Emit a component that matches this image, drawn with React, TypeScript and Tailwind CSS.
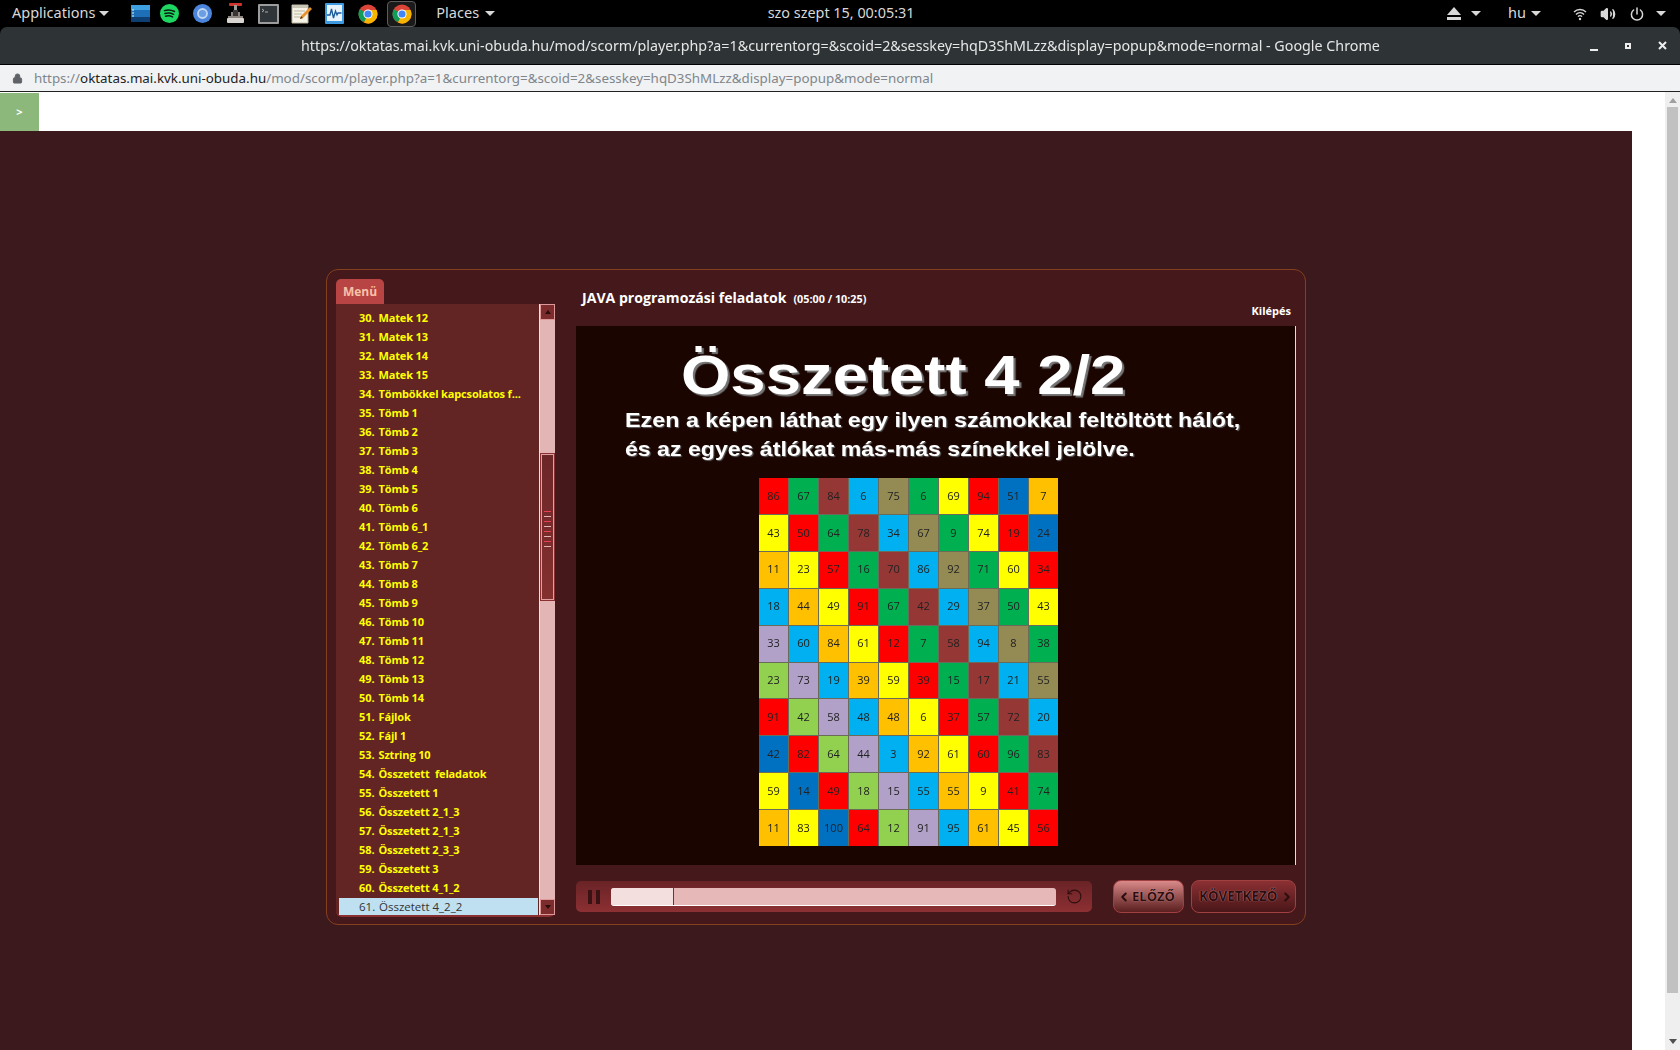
import { ChevronLeft, ChevronRight, RotateCcw, Lock, Volume2 } from 'lucide-react';

const menuItems = [
  ['30.', 'Matek 12'], ['31.', 'Matek 13'], ['32.', 'Matek 14'], ['33.', 'Matek 15'],
  ['34.', 'Tömbökkel kapcsolatos f...'], ['35.', 'Tömb 1'], ['36.', 'Tömb 2'], ['37.', 'Tömb 3'],
  ['38.', 'Tömb 4'], ['39.', 'Tömb 5'], ['40.', 'Tömb 6'], ['41.', 'Tömb 6_1'], ['42.', 'Tömb 6_2'],
  ['43.', 'Tömb 7'], ['44.', 'Tömb 8'], ['45.', 'Tömb 9'], ['46.', 'Tömb 10'], ['47.', 'Tömb 11'],
  ['48.', 'Tömb 12'], ['49.', 'Tömb 13'], ['50.', 'Tömb 14'], ['51.', 'Fájlok'], ['52.', 'Fájl 1'],
  ['53.', 'Sztring 10'], ['54.', 'Összetett  feladatok'], ['55.', 'Összetett 1'], ['56.', 'Összetett 2_1_3'],
  ['57.', 'Összetett 2_1_3'], ['58.', 'Összetett 2_3_3'], ['59.', 'Összetett 3'], ['60.', 'Összetett 4_1_2'],
];

const cellColors: Record<string, string> = {
  R: 'bg-[#ff0000]', G: 'bg-[#00b050]', B: 'bg-[#953735]', C: 'bg-[#00b0f0]', O: 'bg-[#948a54]',
  Y: 'bg-[#ffff00]', A: 'bg-[#ffc000]', D: 'bg-[#0070c0]', P: 'bg-[#b1a0c7]', L: 'bg-[#92d050]',
};

const grid: [number, string][][] = [
  [[86, 'R'], [67, 'G'], [84, 'B'], [6, 'C'], [75, 'O'], [6, 'G'], [69, 'Y'], [94, 'R'], [51, 'D'], [7, 'A']],
  [[43, 'Y'], [50, 'R'], [64, 'G'], [78, 'B'], [34, 'C'], [67, 'O'], [9, 'G'], [74, 'Y'], [19, 'R'], [24, 'D']],
  [[11, 'A'], [23, 'Y'], [57, 'R'], [16, 'G'], [70, 'B'], [86, 'C'], [92, 'O'], [71, 'G'], [60, 'Y'], [34, 'R']],
  [[18, 'C'], [44, 'A'], [49, 'Y'], [91, 'R'], [67, 'G'], [42, 'B'], [29, 'C'], [37, 'O'], [50, 'G'], [43, 'Y']],
  [[33, 'P'], [60, 'C'], [84, 'A'], [61, 'Y'], [12, 'R'], [7, 'G'], [58, 'B'], [94, 'C'], [8, 'O'], [38, 'G']],
  [[23, 'L'], [73, 'P'], [19, 'C'], [39, 'A'], [59, 'Y'], [39, 'R'], [15, 'G'], [17, 'B'], [21, 'C'], [55, 'O']],
  [[91, 'R'], [42, 'L'], [58, 'P'], [48, 'C'], [48, 'A'], [6, 'Y'], [37, 'R'], [57, 'G'], [72, 'B'], [20, 'C']],
  [[42, 'D'], [82, 'R'], [64, 'L'], [44, 'P'], [3, 'C'], [92, 'A'], [61, 'Y'], [60, 'R'], [96, 'G'], [83, 'B']],
  [[59, 'Y'], [14, 'D'], [49, 'R'], [18, 'L'], [15, 'P'], [55, 'C'], [55, 'A'], [9, 'Y'], [41, 'R'], [74, 'G']],
  [[11, 'A'], [83, 'Y'], [100, 'D'], [64, 'R'], [12, 'L'], [91, 'P'], [95, 'C'], [61, 'A'], [45, 'Y'], [56, 'R']],
];

function Caret() {
  return <span className="w-0 h-0 border-x-[5px] border-x-transparent border-t-[5px] border-t-[#d8d8d8]" />;
}

function ChromeIcon() {
  return (
    <svg width="20" height="20" viewBox="0 0 20 20">
      <circle cx="10" cy="10" r="9.5" fill="#db4437" />
      <path d="M10 10 1.8 5.2A9.5 9.5 0 0 0 6 18.6Z" fill="#0f9d58" />
      <path d="M10 10 6 18.6A9.5 9.5 0 0 0 18.6 6H10Z" fill="#f4b400" />
      <circle cx="10" cy="10" r="4.6" fill="#fff" />
      <circle cx="10" cy="10" r="3.6" fill="#4285f4" />
    </svg>
  );
}

function DockIcons() {
  return (
    <>
      <svg className="ml-[22px]" width="19" height="17" viewBox="0 0 19 17">
        <rect width="19" height="17" rx="1" fill="#1d6fb8" />
        <rect x="0" y="0" width="19" height="5" fill="#3ea0e0" />
        <rect x="0" y="12" width="19" height="5" fill="#0d3f73" />
        <path d="M1 5h2M1 8h2M1 11h2" stroke="#dff" strokeWidth="1" />
      </svg>
      <svg className="ml-[10px]" width="19" height="19" viewBox="0 0 19 19">
        <circle cx="9.5" cy="9.5" r="9.5" fill="#1ed760" />
        <path d="M4.5 6.6c3.4-1 7-.7 10 .9M5 9.5c2.8-.8 6-.6 8.6.8M5.6 12.2c2.3-.6 4.9-.4 7 .7" fill="none" stroke="#0b1f10" strokeWidth="1.5" strokeLinecap="round" />
      </svg>
      <svg className="ml-[14px]" width="19" height="19" viewBox="0 0 19 19">
        <circle cx="9.5" cy="9.5" r="9.5" fill="#4c86dc" />
        <circle cx="9.5" cy="9.5" r="5.4" fill="#c3d6f2" />
        <circle cx="9.5" cy="9.5" r="3.6" fill="#6a9fe6" />
      </svg>
      <svg className="ml-[14px]" width="19" height="21" viewBox="0 0 19 21">
        <rect x="3" y="0" width="13" height="3" rx="1" fill="#d0342c" />
        <rect x="8" y="2" width="3" height="10" fill="#9a9a9a" />
        <path d="M5 9h9v4h3v6H2v-6h3Z" fill="#8d8580" />
        <rect x="1" y="15" width="17" height="5" rx="1" fill="#d8d4cf" />
        <rect x="7" y="7" width="5" height="6" fill="#3a3532" />
      </svg>
      <svg className="ml-[13px]" width="21" height="20" viewBox="0 0 21 20">
        <rect width="21" height="20" rx="1" fill="#9c9c9c" />
        <rect x="2" y="2" width="17" height="16" fill="#2f3538" />
        <path d="M4 5l2 1.5L4 8" fill="none" stroke="#ccc" strokeWidth="0.8" />
        <path d="M7 8h3" stroke="#ccc" strokeWidth="0.8" />
      </svg>
      <svg className="ml-[12px]" width="21" height="21" viewBox="0 0 21 21">
        <path d="M1 2h16v18H1Z" fill="#f6f3e6" stroke="#b9b5a3" />
        <path d="M1 2h16v3H1Z" fill="#c9c5b4" />
        <path d="M3 8h11M3 11h8M3 14h6" stroke="#b9b5a3" strokeWidth="1" />
        <path d="M9 16l1-3 9-9 2 2-9 9Z" fill="#e8912d" />
        <path d="M9 16l1-3 2 2Z" fill="#5b3b1c" />
      </svg>
      <svg className="ml-[13px]" width="19" height="21" viewBox="0 0 19 21">
        <rect width="19" height="21" rx="1" fill="#3d9ae0" />
        <rect x="2" y="2" width="15" height="16" fill="#e9f3fb" />
        <path d="M2 12h3l1.5-6 2 9 2-7 1.5 4 1-2h3.5" fill="none" stroke="#185a9c" strokeWidth="1.3" />
      </svg>
      <span className="ml-[14px]"><ChromeIcon /></span>
      <span className="ml-[9px] w-[29px] h-[26px] flex items-center justify-center rounded-[4px] border border-[#5c5c5c] bg-[#1a1a1a]">
        <ChromeIcon />
      </span>
    </>
  );
}

function TopBar() {
  return (
    <div className="h-[27px] bg-black flex items-center text-[#d8d8d8] text-[14.5px]">
      <span className="ml-[12px] mb-[2px]">Applications</span>
      <span className="ml-[4px] flex"><Caret /></span>
      <DockIcons />
      <span className="ml-[20px] mb-[2px]">Places</span>
      <span className="ml-[6px] flex"><Caret /></span>
      <span className="ml-[256px] w-[180px] mb-[2px] text-center text-[14.4px] whitespace-nowrap">szo szept 15, 00:05:31</span>
      <svg className="ml-[516px]" width="14" height="13" viewBox="0 0 14 13" fill="#d8d8d8">
        <path d="M7 0l7 8H0Z" />
        <rect y="10" width="14" height="3" />
      </svg>
      <span className="ml-[10px] flex"><Caret /></span>
      <span className="ml-[27px] mb-[2px]">hu</span>
      <span className="ml-[5px] flex"><Caret /></span>
      <svg className="ml-[32px]" width="14" height="14" viewBox="0 0 14 14" fill="none" stroke="#d8d8d8" strokeWidth="1.4">
        <path d="M1 5a8.5 8.5 0 0 1 12 0M3 7.4a5.5 5.5 0 0 1 8 0M5 9.6a2.6 2.6 0 0 1 4 0" />
        <circle cx="7" cy="12" r="1.2" fill="#d8d8d8" stroke="none" />
      </svg>
      <Volume2 className="ml-[13px]" size={16} color="#d8d8d8" fill="#d8d8d8" />
      <svg className="ml-[14px]" width="14" height="14" viewBox="0 0 14 14" fill="none" stroke="#d8d8d8" strokeWidth="1.5" strokeLinecap="round">
        <path d="M7 1v6M3.6 3a5.6 5.6 0 1 0 6.8 0" />
      </svg>
      <span className="ml-[12px] flex"><Caret /></span>
    </div>
  );
}

function TitleBar() {
  return (
    <div className="h-[38px] bg-[#2e3436] rounded-t-[7px] flex items-center text-[#e6e6e6] text-[14.5px] font-['Noto_Sans',sans-serif] border-b border-black">
      <span className="ml-[301px] w-[1078px] whitespace-nowrap origin-left scale-x-[0.985]">https://oktatas.mai.kvk.uni-obuda.hu/mod/scorm/player.php?a=1&amp;currentorg=&amp;scoid=2&amp;sesskey=hqD3ShMLzz&amp;display=popup&amp;mode=normal - Google Chrome</span>
      <span className="ml-[211px] w-[8px] h-[2px] mt-[8px] bg-[#eee]" />
      <span className="ml-[27px] w-[6px] h-[6px] border-2 border-[#eee]" />
      <svg className="ml-[27px]" width="9" height="9" viewBox="0 0 9 9" stroke="#eee" strokeWidth="2">
        <path d="M1 1l7 7M8 1L1 8" />
      </svg>
    </div>
  );
}

function AddressBar() {
  return (
    <div className="h-[27px] bg-[#f1f2f4] border-b border-[#222] flex items-center text-[13.37px] font-['Noto_Sans',sans-serif] text-[#80868b]">
      <Lock className="ml-[12px]" size={11} color="#5f6368" fill="#5f6368" />
      <span className="ml-[11px] whitespace-nowrap">
        https://<span className="text-[#222]">oktatas.mai.kvk.uni-obuda.hu</span>/mod/scorm/player.php?a=1&amp;currentorg=&amp;scoid=2&amp;sesskey=hqD3ShMLzz&amp;display=popup&amp;mode=normal
      </span>
    </div>
  );
}

function ScrollGrip() {
  return (
    <div className="flex flex-col gap-[4px] items-center mt-[56px]">
      {[0, 1, 2, 3, 4, 5, 6, 7].map(i => (
        <span key={i} className={`w-[7px] h-px ${i % 2 === 0 ? 'bg-[#e8404f]' : 'bg-[#e6b3b3]'}`} />
      ))}
    </div>
  );
}

function SidebarMenu() {
  return (
    <div className="w-[219px] flex flex-col ml-[9px] mt-[9px]">
      <div className="w-[48px] h-[25px] rounded-t-[5px] bg-[#b84444] flex items-center justify-center text-[12px] font-bold text-[#f7c2a8] font-['Open_Sans',sans-serif]">
        Menü
      </div>
      <div className="h-[613px] bg-[#632424] rounded-b-[6px] border-b-2 border-[#8a3030] flex">
        <div className="w-[203px] pt-[5px] font-['Open_Sans',sans-serif] text-[11px] font-bold text-[#ffff00]">
          {menuItems.map(([n, name]) => (
            <div key={n} className="h-[19px] flex items-center pl-[23px] whitespace-pre">
              <span className="w-[19.5px]">{n}</span>
              <span className="tracking-[-0.15px]">{name}</span>
            </div>
          ))}
          <div className="h-[17px] ml-[3px] w-[199px] bg-[#bfe0f0] flex items-center pl-[20px] text-[#333] text-[11.5px] font-normal whitespace-pre">
            <span className="w-[20px]">61.</span>
            <span>Összetett 4_2_2</span>
          </div>
        </div>
        <div className="w-[16px] border-l border-[#f3e3e3] flex flex-col bg-[#e4b5b5]">
          <div className="h-[16px] bg-[#7d2c2e] border border-[#d99] flex items-center justify-center">
            <span className="w-0 h-0 border-x-[3px] border-x-transparent border-b-[4px] border-b-[#2a0c0c]" />
          </div>
          <div className="h-[133px]" />
          <div className="h-[148px] bg-[#6c2628] border border-[#8a3033]">
            <div className="h-[146px] border border-[#e0a0a0] bg-gradient-to-b from-[#6c2628] to-[#84302f]">
              <ScrollGrip />
            </div>
          </div>
          <div className="flex-1" />
          <div className="h-[16px] bg-[#7d2c2e] border border-[#d99] flex items-center justify-center">
            <span className="w-0 h-0 border-x-[3px] border-x-transparent border-t-[4px] border-t-[#2a0c0c]" />
          </div>
        </div>
      </div>
    </div>
  );
}

function Slide() {
  return (
    <div className="h-[539px] bg-[#1a0500] border-r border-[#ddd] flex flex-col font-['Liberation_Sans',sans-serif] font-bold text-white">
      <div className="pl-[105px] pt-[16px] text-[56px] leading-[66px] [text-shadow:2px_2px_1px_#777] whitespace-nowrap">
        <div className="origin-left scale-x-[1.133]">Összetett 4 2/2</div>
      </div>
      <div className="pl-[49px] -mt-[3px] text-[21px] leading-[29px] [text-shadow:1px_1px_1px_#666] whitespace-nowrap">
        <div className="origin-left scale-x-[1.11]">Ezen a képen láthat egy ilyen számokkal feltöltött hálót,</div>
        <div className="origin-left scale-x-[1.1]">és az egyes átlókat más-más színekkel jelölve.</div>
      </div>
      <div className="ml-[183px] mt-[15px] w-[299px] h-[368px] grid grid-cols-10 grid-rows-10 gap-px bg-[#6b6b5a] blur-[0.4px]">
        {grid.flat().map(([n, c], i) => (
          <div key={i} className={`${cellColors[c]} flex items-center justify-center text-[11px] font-normal font-['Open_Sans',sans-serif] text-[#222]`}>
            {n}
          </div>
        ))}
      </div>
    </div>
  );
}

function Controls() {
  return (
    <div className="mt-[15px] flex items-center">
      <div className="w-[516px] h-[31px] rounded-[5px] bg-gradient-to-b from-[#6a2326] to-[#8c3033] flex items-center">
        <div className="ml-[12px] flex gap-[4px]">
          <span className="w-[4px] h-[14px] bg-[#3a1214]" />
          <span className="w-[4px] h-[14px] bg-[#3a1214]" />
        </div>
        <div className="ml-[11px] w-[445px] h-[18px] rounded-[3px] bg-[#e6b8b8] border-b border-white flex overflow-hidden">
          <div className="w-[63px] bg-[#f4dfdf] border-r border-[#7a3030]" />
        </div>
        <RotateCcw className="ml-[10px]" size={17} color="#2d0d0e" strokeWidth={1.5} />
      </div>
      <button className="ml-[21px] w-[71px] h-[33px] pl-[3px] rounded-[8px] border border-[#a04040] bg-gradient-to-b from-[#d98a8a] to-[#5c1f20] flex items-center text-[13px] font-bold text-[#2d0d0e] font-['Open_Sans',sans-serif] [text-shadow:0_0_1px_#e8b0b0]">
        <ChevronLeft size={14} strokeWidth={3.5} />
        <span className="ml-[1px]">ELŐZŐ</span>
      </button>
      <button className="ml-[7px] w-[105px] h-[33px] pl-[7px] pr-px rounded-[8px] border border-[#a04040] bg-gradient-to-b from-[#8c3033] to-[#4a1719] flex items-center justify-between text-[13.4px] font-bold text-[#2d0d0e] font-['Open_Sans',sans-serif] [text-shadow:0_0_1px_#e8b0b0]">
        <span>KÖVETKEZŐ</span>
        <ChevronRight size={14} strokeWidth={3.5} />
      </button>
    </div>
  );
}

function Player() {
  return (
    <div className="ml-[326px] mt-[138px] w-[980px] h-[656px] rounded-[12px] border border-[#84401c] bg-[#45191b] flex">
      <SidebarMenu />
      <div className="ml-[21px] w-[720px] flex flex-col">
        <div className="h-[56px] relative text-white font-['Open_Sans',sans-serif] font-bold">
          <div className="pt-[17px] pl-[6px] flex items-baseline">
            <span className="text-[14.1px]">JAVA programozási feladatok</span>
            <span className="ml-[7px] text-[10.8px]">(05:00 / 10:25)</span>
          </div>
          <span className="absolute right-[5px] top-[33px] text-[11px]">Kilépés</span>
        </div>
        <Slide />
        <Controls />
      </div>
    </div>
  );
}

export default function App() {
  return (
    <div className="w-[1680px] h-[1050px] overflow-hidden bg-black flex flex-col font-['Noto_Sans',sans-serif]">
      <TopBar />
      <TitleBar />
      <AddressBar />
      <div className="flex-1 bg-white flex min-h-0">
        <div className="w-[1665px] flex flex-col">
          <div className="h-[39px] flex">
            <div className="w-[39px] h-[38px] mt-px bg-[#8cb87c] flex items-center justify-center text-white text-[11px] font-bold">&gt;</div>
          </div>
          <div className="w-[1632px] flex-1 bg-[#3b191d] overflow-hidden">
            <Player />
          </div>
        </div>
        <div className="w-[15px] flex flex-col items-center bg-[#efefef]">
          <span className="mt-[6px] w-0 h-0 border-x-[4px] border-x-transparent border-b-[5px] border-b-[#a0a0a0]" />
          <div className="mt-[4px] w-[11px] h-[886px] bg-[#c1c1c1]" />
          <div className="flex-1" />
          <span className="mb-[6px] w-0 h-0 border-x-[4px] border-x-transparent border-t-[5px] border-t-[#505050]" />
        </div>
      </div>
    </div>
  );
}
